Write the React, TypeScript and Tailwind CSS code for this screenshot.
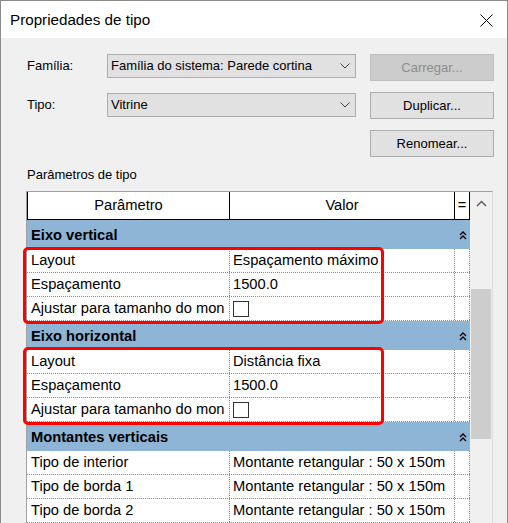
import React from 'react';

type Row =
  | { kind: 'group'; label: string }
  | { kind: 'text'; param: string; value: string }
  | { kind: 'check'; param: string };

const ROWS: Row[] = [
  { kind: 'group', label: 'Eixo vertical' },
  { kind: 'text', param: 'Layout', value: 'Espaçamento máximo' },
  { kind: 'text', param: 'Espaçamento', value: '1500.0' },
  { kind: 'check', param: 'Ajustar para tamanho do mon' },
  { kind: 'group', label: 'Eixo horizontal' },
  { kind: 'text', param: 'Layout', value: 'Distância fixa' },
  { kind: 'text', param: 'Espaçamento', value: '1500.0' },
  { kind: 'check', param: 'Ajustar para tamanho do mon' },
  { kind: 'group', label: 'Montantes verticais' },
  { kind: 'text', param: 'Tipo de interior', value: 'Montante retangular : 50 x 150m' },
  { kind: 'text', param: 'Tipo de borda 1', value: 'Montante retangular : 50 x 150m' },
  { kind: 'text', param: 'Tipo de borda 2', value: 'Montante retangular : 50 x 150m' },
];

function Chevron() {
  return (
    <svg width="10" height="6" viewBox="0 0 10 6" className="shrink-0">
      <path d="M0.5 0.5 L5 5 L9.5 0.5" fill="none" stroke="#404040" strokeWidth="1" />
    </svg>
  );
}

function Collapse() {
  return (
    <svg width="8" height="9" viewBox="0 0 8 9">
      <path d="M1 4 L4 1 L7 4 M1 8 L4 5 L7 8" fill="none" stroke="#000" strokeWidth="1.3" />
    </svg>
  );
}

function Combo({ text }: { text: string }) {
  return (
    <div className="w-[249px] h-[24px] bg-[#e1e1e1] border border-[#adadad] flex items-center pl-[3px] pr-[5px]">
      <span className="flex-1 whitespace-nowrap overflow-hidden">{text}</span>
      <Chevron />
    </div>
  );
}

function Button({ label, disabled }: { label: string; disabled?: boolean }) {
  return (
    <div
      className={`w-[124px] h-[27px] flex items-center justify-center border ${
        disabled ? 'bg-[#cccccc] border-[#bfbfbf] text-[#8d8d8d]' : 'bg-[#e1e1e1] border-[#adadad] text-black'
      }`}
    >
      {label}
    </div>
  );
}

function GridRow({ row }: { row: Row }) {
  if (row.kind === 'group') {
    return (
      <div className="h-[29px] bg-[#8eb4d6] flex items-center pt-[1px]">
        <span className="flex-1 pl-[4px] font-bold whitespace-nowrap">{row.label}</span>
        <div className="w-[15px] flex justify-center">
          <Collapse />
        </div>
      </div>
    );
  }
  return (
    <div className="h-[24px] flex bg-white border-b border-dotted border-[#8a8a8a]">
      <div className="w-[203px] shrink-0 border-r border-dotted border-[#8a8a8a] pl-[4px] flex items-center whitespace-nowrap">
        {row.param}
      </div>
      <div className="w-[225px] shrink-0 border-r border-dotted border-[#8a8a8a] pl-[3px] flex items-center whitespace-nowrap">
        {row.kind === 'text' ? row.value : <div className="w-[16px] h-[16px] border border-[#333] bg-white" />}
      </div>
      <div className="w-[15px] shrink-0 border-r border-dotted border-[#8a8a8a]" />
    </div>
  );
}

export default function App() {
  return (
    <div className="relative w-[508px] h-[523px] overflow-hidden bg-[#f0f0f0] border-l border-r border-t border-[#8a8a8a] font-['Liberation_Sans',Arial,sans-serif] text-[13px] text-black">
      <div className="h-[37px] bg-white flex items-center justify-between pl-[9px] pr-[14px]">
        <span className="text-[15.2px] pt-[2px]">Propriedades de tipo</span>
        <svg width="13" height="13" viewBox="0 0 13 13" className="mt-[1px]">
          <path d="M0.5 0.5 L12.5 12.5 M12.5 0.5 L0.5 12.5" stroke="#000" strokeWidth="1" />
        </svg>
      </div>

      <div className="pl-[26px] pt-[16px]">
        <div className="flex flex-col gap-[11px]">
          <div className="flex items-start">
            <div className="w-[80px] h-[24px] flex items-center">Família:</div>
            <Combo text="Família do sistema: Parede cortina" />
            <div className="ml-[14px]">
              <Button label="Carregar..." disabled />
            </div>
          </div>
          <div className="flex items-start">
            <div className="w-[80px] h-[24px] mt-[1px] flex items-center">Tipo:</div>
            <div className="mt-[1px]">
              <Combo text="Vitrine" />
            </div>
            <div className="ml-[14px]">
              <Button label="Duplicar..." />
            </div>
          </div>
          <div className="flex">
            <div className="ml-[343px]">
              <Button label="Renomear..." />
            </div>
          </div>
        </div>

        <div className="mt-[9px] h-[17px] leading-[17px]">Parâmetros de tipo</div>

        <div className="mt-[8px] -ml-[1px] w-[467px] border-l border-t border-r border-l-[#a0a0a0] border-t-[#a0a0a0] border-r-[#dadada] flex text-[14.7px]">
          <div className="w-[443px] shrink-0 flex flex-col">
            <div className="h-[28px] bg-white flex border-b border-black">
              <div className="w-[203px] border-l border-r border-black flex items-center justify-center">Parâmetro</div>
              <div className="w-[225px] border-r border-black flex items-center justify-center">Valor</div>
              <div className="w-[15px] border-r border-black flex items-center justify-center">=</div>
            </div>
            {ROWS.map((row, i) => (
              <GridRow key={i} row={row} />
            ))}
          </div>
          <div className="w-[22px] shrink-0 flex flex-col bg-[#f0f0f0]">
            <div className="h-[22px] flex items-center justify-center pl-[1px]">
              <svg width="11" height="7" viewBox="0 0 11 7">
                <path d="M1 6 L5.5 1.5 L10 6" fill="none" stroke="#606060" strokeWidth="1.5" />
              </svg>
            </div>
            <div className="h-[75px]" />
            <div className="ml-[1px] w-[20px] h-[150px] bg-[#cdcdcd]" />
          </div>
        </div>
      </div>

      <div className="absolute left-[22px] top-[246px] w-[361px] h-[77px] border-[3px] border-[#ff0000] rounded-[5px]" />
      <div className="absolute left-[22px] top-[346px] w-[361px] h-[78px] border-[3px] border-[#ff0000] rounded-[5px]" />
    </div>
  );
}
